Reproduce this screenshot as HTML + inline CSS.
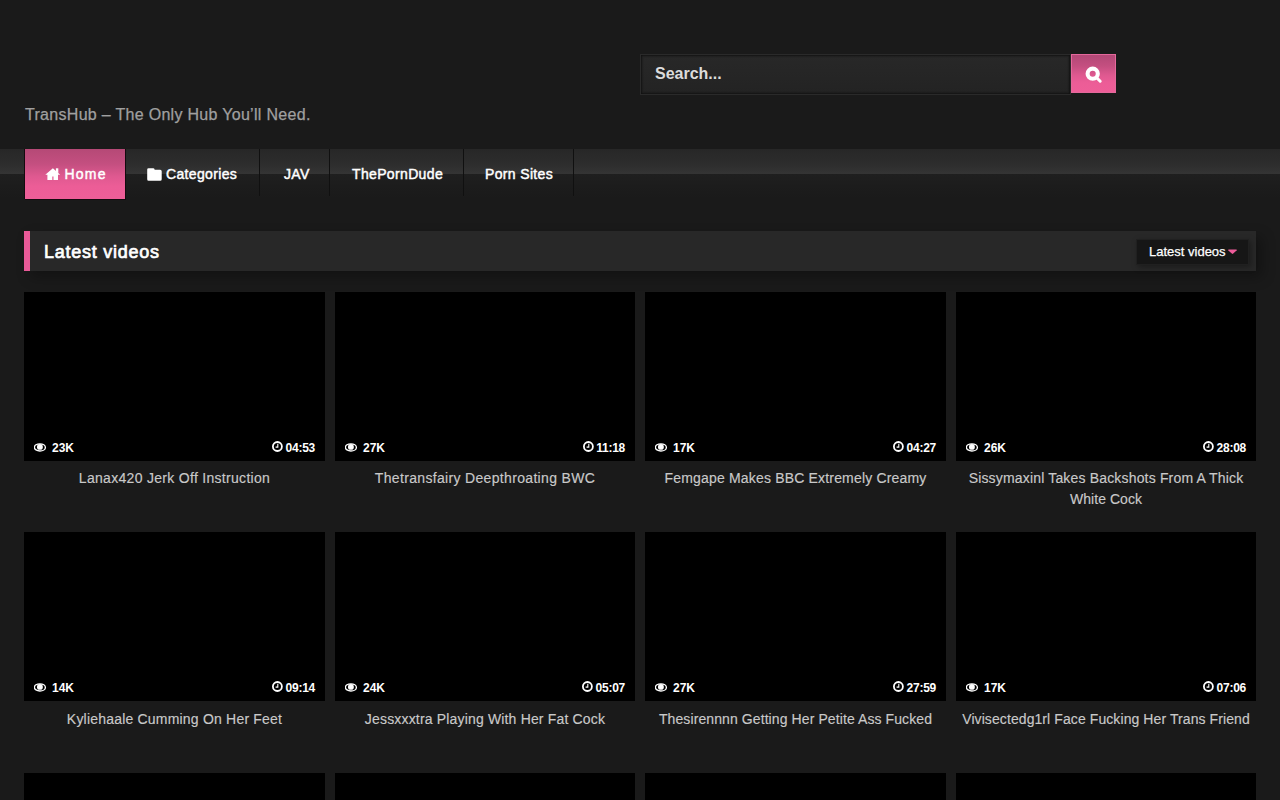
<!DOCTYPE html>
<html><head><meta charset="utf-8">
<style>
*{box-sizing:border-box;margin:0;padding:0}
html,body{width:1280px;height:800px;overflow:hidden;background:#1a1a1a;font-family:"Liberation Sans",sans-serif;color:#fff}
.abs{position:absolute}
#tagline{left:25px;top:106px;font-size:16px;color:#a0a0a0;white-space:nowrap;letter-spacing:0.3px;-webkit-text-stroke:0.25px #a0a0a0}
#search{left:640px;top:54px;width:431px;height:41px;border:1px solid #2a2a2a;background:linear-gradient(#282828,#232323);box-shadow:inset 0 0 2px 1px #121212}
#search span{position:absolute;left:14px;top:10px;font-weight:bold;font-size:16px;color:#dcdcdc}
#sbtn{left:1071px;top:54px;width:45px;height:39px;background:linear-gradient(#b24876 0%,#c44f80 30%,#df5990 55%,#ec5d97 75%,#ee5e98 100%);border:1px solid #e4689b}
#nav{left:0;top:149px;width:1280px;height:50px;background:linear-gradient(#272727 0%,#2d2d2d 30%,#343434 49%,#1f1f1f 50%,#1c1c1c 75%,#1a1a1a 100%)}
.ni{position:absolute;top:0;height:50px;font-size:14px;font-weight:normal;-webkit-text-stroke:0.45px #fff;letter-spacing:0.35px;color:#fff;white-space:nowrap}
.ni:after{content:"";position:absolute;right:0;top:0;width:1px;height:47px;background:#101010}
#home:after{height:50px;background:#140a0e}
.ni span{position:absolute;top:16.8px}
#home{left:25px;width:101px;background:linear-gradient(#b54976 0%,#c44f80 30%,#df5990 55%,#ec5d97 75%,#ee5e98 100%);box-shadow:-1px 0 0 #140a0e,0 1px 0 #140a0e}
#ttl{left:24px;top:231px;width:1232px;height:40px;background:#282828;border-left:6px solid #e95a98;box-shadow:6px 6px 14px rgba(0,0,0,.3)}
#ttl h2{position:absolute;left:14px;top:10.5px;font-size:18px;font-weight:normal;-webkit-text-stroke:0.7px #fff;letter-spacing:0.75px;color:#fff}
#flt{left:1136px;top:239px;width:113px;height:26px;background:#161616;border:1px solid #202020;box-shadow:2px 2px 6px rgba(0,0,0,.35)}
#flt span{position:absolute;left:12px;top:3.6px;font-size:13px;color:#fff;white-space:nowrap;-webkit-text-stroke:0.25px #fff}
.th{position:absolute;background:#000;height:169px}
.t{position:absolute;font-size:14px;color:#c9c9c9;text-align:center;line-height:21px;-webkit-text-stroke:0.15px #c9c9c9}
.v{position:absolute;font-size:12px;font-weight:bold;color:#fff;white-space:nowrap}
</style></head><body>
<div id="tagline" class="abs">TransHub – The Only Hub You’ll Need.</div>
<div id="search" class="abs"><span>Search...</span></div>
<div id="sbtn" class="abs"><svg width="20" height="20" viewBox="0 0 20 20" style="position:absolute;left:11.5px;top:10px"><circle cx="8.7" cy="8.7" r="5.1" fill="none" stroke="#fff" stroke-width="4.1"/><path d="M13.2 13.2L16.2 16.2" stroke="#fff" stroke-width="3" stroke-linecap="round"/></svg></div>
<div id="nav" class="abs">
 <div id="home" class="ni"><svg width="16" height="14" viewBox="0 0 16 14" style="position:absolute;left:20px;top:18px"><path d="M0.3 7.8L7.9 1.2L15.2 7.8H13V13H8.5V9.6H7.3V13H2.4V7.8Z" fill="#fff"/><rect x="10.9" y="1.3" width="2.4" height="4.6" fill="#fff"/></svg><span style="left:39.5px;letter-spacing:1.2px">Home</span></div>
 <div class="ni" style="left:125px;width:135px"><svg width="15" height="13" viewBox="0 0 15 13" style="position:absolute;left:21.5px;top:19.3px"><path d="M1.6 0.2H6.2Q7.4 0.2 7.6 1.4V1.8H13.2Q14.7 1.8 14.7 3.3V11.2Q14.7 12.7 13.2 12.7H1.6Q0.2 12.7 0.2 11.2V1.6Q0.2 0.2 1.6 0.2Z" fill="#fff"/></svg><span style="left:41px">Categories</span></div>
 <div class="ni" style="left:260px;width:70px"><span style="left:24px">JAV</span></div>
 <div class="ni" style="left:330px;width:134px"><span style="left:22px">ThePornDude</span></div>
 <div class="ni" style="left:464px;width:110px"><span style="left:21px">Porn Sites</span></div>
</div>
<div id="ttl" class="abs"><h2>Latest videos</h2></div>
<div id="flt" class="abs"><span>Latest videos</span><svg width="10" height="6" viewBox="0 0 10 6" style="position:absolute;left:90.5px;top:9.3px"><path d="M1 0.4H8Q9.3 0.4 8.6 1.4L5.2 4.6Q4.5 5.2 3.8 4.6L0.4 1.4Q-0.3 0.4 1 0.4Z" fill="#ee5c9a"/></svg></div>
<div id="grid"><div class="th" style="left:24px;top:292px;width:301px">
<svg width="13" height="10" viewBox="0 0 13 10" style="position:absolute;left:10px;top:150.5px"><ellipse cx="5.9" cy="4.4" rx="5.5" ry="3.55" fill="none" stroke="#fff" stroke-width="1.4"/><circle cx="5.9" cy="3.9" r="2.95" fill="#fff"/></svg>
<div class="v" style="left:28px;top:149px">23K</div>
<div class="v" style="right:10px;top:149px;padding-left:12.5px;letter-spacing:-0.25px"><svg width="11" height="11" viewBox="0 0 11 11" style="position:absolute;left:-1px;top:0px"><circle cx="5.4" cy="5.5" r="4.5" fill="none" stroke="#fff" stroke-width="1.8"/><path d="M5.8 2.8V6.1H3.6" fill="none" stroke="#fff" stroke-width="1.1"/></svg>04:53</div>
</div>
<div class="t" style="left:4px;top:468px;width:341px;white-space:nowrap;letter-spacing:0.3px">Lanax420 Jerk Off Instruction</div>
<div class="th" style="left:335px;top:292px;width:300px">
<svg width="13" height="10" viewBox="0 0 13 10" style="position:absolute;left:10px;top:150.5px"><ellipse cx="5.9" cy="4.4" rx="5.5" ry="3.55" fill="none" stroke="#fff" stroke-width="1.4"/><circle cx="5.9" cy="3.9" r="2.95" fill="#fff"/></svg>
<div class="v" style="left:28px;top:149px">27K</div>
<div class="v" style="right:10px;top:149px;padding-left:12.5px;letter-spacing:-0.25px"><svg width="11" height="11" viewBox="0 0 11 11" style="position:absolute;left:-1px;top:0px"><circle cx="5.4" cy="5.5" r="4.5" fill="none" stroke="#fff" stroke-width="1.8"/><path d="M5.8 2.8V6.1H3.6" fill="none" stroke="#fff" stroke-width="1.1"/></svg>11:18</div>
</div>
<div class="t" style="left:315px;top:468px;width:340px;white-space:nowrap;letter-spacing:0.33px">Thetransfairy Deepthroating BWC</div>
<div class="th" style="left:645px;top:292px;width:301px">
<svg width="13" height="10" viewBox="0 0 13 10" style="position:absolute;left:10px;top:150.5px"><ellipse cx="5.9" cy="4.4" rx="5.5" ry="3.55" fill="none" stroke="#fff" stroke-width="1.4"/><circle cx="5.9" cy="3.9" r="2.95" fill="#fff"/></svg>
<div class="v" style="left:28px;top:149px">17K</div>
<div class="v" style="right:10px;top:149px;padding-left:12.5px;letter-spacing:-0.25px"><svg width="11" height="11" viewBox="0 0 11 11" style="position:absolute;left:-1px;top:0px"><circle cx="5.4" cy="5.5" r="4.5" fill="none" stroke="#fff" stroke-width="1.8"/><path d="M5.8 2.8V6.1H3.6" fill="none" stroke="#fff" stroke-width="1.1"/></svg>04:27</div>
</div>
<div class="t" style="left:625px;top:468px;width:341px;white-space:nowrap;letter-spacing:0.18px">Femgape Makes BBC Extremely Creamy</div>
<div class="th" style="left:956px;top:292px;width:300px">
<svg width="13" height="10" viewBox="0 0 13 10" style="position:absolute;left:10px;top:150.5px"><ellipse cx="5.9" cy="4.4" rx="5.5" ry="3.55" fill="none" stroke="#fff" stroke-width="1.4"/><circle cx="5.9" cy="3.9" r="2.95" fill="#fff"/></svg>
<div class="v" style="left:28px;top:149px">26K</div>
<div class="v" style="right:10px;top:149px;padding-left:12.5px;letter-spacing:-0.25px"><svg width="11" height="11" viewBox="0 0 11 11" style="position:absolute;left:-1px;top:0px"><circle cx="5.4" cy="5.5" r="4.5" fill="none" stroke="#fff" stroke-width="1.8"/><path d="M5.8 2.8V6.1H3.6" fill="none" stroke="#fff" stroke-width="1.1"/></svg>28:08</div>
</div>
<div class="t" style="left:936px;top:468px;width:340px;white-space:nowrap;letter-spacing:0px"><span style="letter-spacing:0.17px">Sissymaxinl Takes Backshots From A Thick</span><br><span style="letter-spacing:0.05px">White Cock</span></div>
<div class="th" style="left:24px;top:532px;width:301px">
<svg width="13" height="10" viewBox="0 0 13 10" style="position:absolute;left:10px;top:150.5px"><ellipse cx="5.9" cy="4.4" rx="5.5" ry="3.55" fill="none" stroke="#fff" stroke-width="1.4"/><circle cx="5.9" cy="3.9" r="2.95" fill="#fff"/></svg>
<div class="v" style="left:28px;top:149px">14K</div>
<div class="v" style="right:10px;top:149px;padding-left:12.5px;letter-spacing:-0.25px"><svg width="11" height="11" viewBox="0 0 11 11" style="position:absolute;left:-1px;top:0px"><circle cx="5.4" cy="5.5" r="4.5" fill="none" stroke="#fff" stroke-width="1.8"/><path d="M5.8 2.8V6.1H3.6" fill="none" stroke="#fff" stroke-width="1.1"/></svg>09:14</div>
</div>
<div class="t" style="left:4px;top:709px;width:341px;white-space:nowrap;letter-spacing:0.2px">Kyliehaale Cumming On Her Feet</div>
<div class="th" style="left:335px;top:532px;width:300px">
<svg width="13" height="10" viewBox="0 0 13 10" style="position:absolute;left:10px;top:150.5px"><ellipse cx="5.9" cy="4.4" rx="5.5" ry="3.55" fill="none" stroke="#fff" stroke-width="1.4"/><circle cx="5.9" cy="3.9" r="2.95" fill="#fff"/></svg>
<div class="v" style="left:28px;top:149px">24K</div>
<div class="v" style="right:10px;top:149px;padding-left:12.5px;letter-spacing:-0.25px"><svg width="11" height="11" viewBox="0 0 11 11" style="position:absolute;left:-1px;top:0px"><circle cx="5.4" cy="5.5" r="4.5" fill="none" stroke="#fff" stroke-width="1.8"/><path d="M5.8 2.8V6.1H3.6" fill="none" stroke="#fff" stroke-width="1.1"/></svg>05:07</div>
</div>
<div class="t" style="left:315px;top:709px;width:340px;white-space:nowrap;letter-spacing:0.17px">Jessxxxtra Playing With Her Fat Cock</div>
<div class="th" style="left:645px;top:532px;width:301px">
<svg width="13" height="10" viewBox="0 0 13 10" style="position:absolute;left:10px;top:150.5px"><ellipse cx="5.9" cy="4.4" rx="5.5" ry="3.55" fill="none" stroke="#fff" stroke-width="1.4"/><circle cx="5.9" cy="3.9" r="2.95" fill="#fff"/></svg>
<div class="v" style="left:28px;top:149px">27K</div>
<div class="v" style="right:10px;top:149px;padding-left:12.5px;letter-spacing:-0.25px"><svg width="11" height="11" viewBox="0 0 11 11" style="position:absolute;left:-1px;top:0px"><circle cx="5.4" cy="5.5" r="4.5" fill="none" stroke="#fff" stroke-width="1.8"/><path d="M5.8 2.8V6.1H3.6" fill="none" stroke="#fff" stroke-width="1.1"/></svg>27:59</div>
</div>
<div class="t" style="left:625px;top:709px;width:341px;white-space:nowrap;letter-spacing:0.095px">Thesirennnn Getting Her Petite Ass Fucked</div>
<div class="th" style="left:956px;top:532px;width:300px">
<svg width="13" height="10" viewBox="0 0 13 10" style="position:absolute;left:10px;top:150.5px"><ellipse cx="5.9" cy="4.4" rx="5.5" ry="3.55" fill="none" stroke="#fff" stroke-width="1.4"/><circle cx="5.9" cy="3.9" r="2.95" fill="#fff"/></svg>
<div class="v" style="left:28px;top:149px">17K</div>
<div class="v" style="right:10px;top:149px;padding-left:12.5px;letter-spacing:-0.25px"><svg width="11" height="11" viewBox="0 0 11 11" style="position:absolute;left:-1px;top:0px"><circle cx="5.4" cy="5.5" r="4.5" fill="none" stroke="#fff" stroke-width="1.8"/><path d="M5.8 2.8V6.1H3.6" fill="none" stroke="#fff" stroke-width="1.1"/></svg>07:06</div>
</div>
<div class="t" style="left:936px;top:709px;width:340px;white-space:nowrap;letter-spacing:0.087px">Vivisectedg1rl Face Fucking Her Trans Friend</div>
<div class="th" style="left:24px;top:773px;width:301px">
</div>
<div class="th" style="left:335px;top:773px;width:300px">
</div>
<div class="th" style="left:645px;top:773px;width:301px">
</div>
<div class="th" style="left:956px;top:773px;width:300px">
</div></div><!--/grid-->
</body></html>
